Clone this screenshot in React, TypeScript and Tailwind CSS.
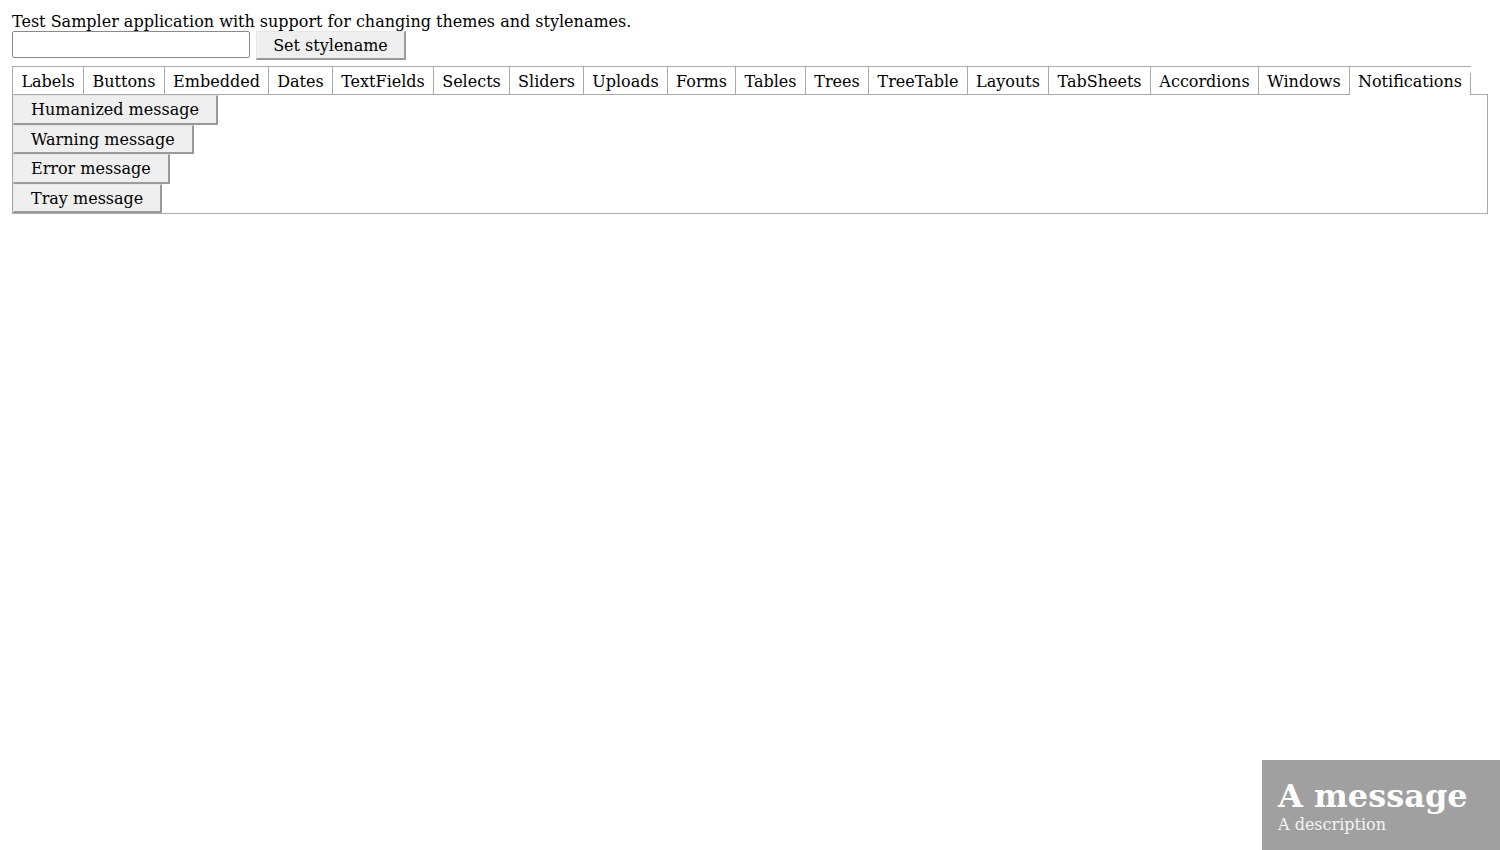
import React from "react";

const tabs: { label: string; w: string }[] = [
  { label: "Labels", w: "w-[71px]" },
  { label: "Buttons", w: "w-[81px]" },
  { label: "Embedded", w: "w-[104px]" },
  { label: "Dates", w: "w-[64px]" },
  { label: "TextFields", w: "w-[101px]" },
  { label: "Selects", w: "w-[76px]" },
  { label: "Sliders", w: "w-[74px]" },
  { label: "Uploads", w: "w-[84px]" },
  { label: "Forms", w: "w-[68px]" },
  { label: "Tables", w: "w-[70px]" },
  { label: "Trees", w: "w-[63px]" },
  { label: "TreeTable", w: "w-[99px]" },
  { label: "Layouts", w: "w-[81px]" },
  { label: "TabSheets", w: "w-[102px]" },
  { label: "Accordions", w: "w-[108px]" },
  { label: "Windows", w: "w-[91px]" },
];

function NativeButton({ children }: { children: React.ReactNode }) {
  return (
    <button className="box-border h-[29.5px] px-[17px] pt-[1px] bg-[#efefef] text-[16px] leading-[19px] text-black border-t border-l border-t-[#e6e6e6] border-l-[#e6e6e6] border-r-2 border-b-2 border-r-[#9a9a9a] border-b-[#9a9a9a] text-left whitespace-nowrap">
      {children}
    </button>
  );
}

export default function App() {
  return (
    <div className="min-h-[850px] bg-white text-black font-['DejaVu_Serif',serif] text-[16px] leading-[19px] p-[12px] pt-[12px]">
      <div className="h-[19px] whitespace-nowrap">
        Test Sampler application with support for changing themes and stylenames.
      </div>
      <div className="flex items-start gap-[6px]">
        <input
          type="text"
          className="box-border w-[238px] h-[27px] border border-[#8a8a8a] rounded-[2px] bg-white px-[2px] outline-none"
        />
        <button className="box-border h-[29px] w-[150px] bg-[#efefef] text-[16px] leading-[19px] text-black border-t border-l border-t-[#e6e6e6] border-l-[#e6e6e6] border-r-2 border-b-2 border-r-[#9a9a9a] border-b-[#9a9a9a] whitespace-nowrap">
          Set stylename
        </button>
      </div>
      <div className="mt-[6px] w-[1476px]">
        <div className="flex items-stretch">
          <div className="flex border-t border-[#aaaaaa]">
            {tabs.map((t) => (
              <div
                key={t.label}
                className={`box-border h-[28px] pt-[5px] border-l border-b border-[#aaaaaa] whitespace-nowrap text-center ${t.w}`}
              >
                {t.label}
              </div>
            ))}
            <div className="box-border w-[121px] h-[28px] pt-[5px] border-l border-[#aaaaaa] whitespace-nowrap text-center">
              Notifications
            </div>
            <div className="w-px self-end h-[22px] bg-[#aaaaaa]" />
          </div>
          <div className="flex-1 self-end border-b border-[#aaaaaa]" />
        </div>
        <div className="box-border border-l border-r border-b border-[#aaaaaa] flex flex-col items-start">
          <NativeButton>Humanized message</NativeButton>
          <NativeButton>Warning message</NativeButton>
          <NativeButton>Error message</NativeButton>
          <NativeButton>Tray message</NativeButton>
        </div>
      </div>
      <div className="fixed right-0 bottom-0 w-[238px] h-[90px] bg-[#a0a0a0] text-white px-[16px] pt-[18px]">
        <div className="font-bold text-[32px] leading-[37px] whitespace-nowrap">A message</div>
        <div className="text-[16px] leading-[19px] text-[#f4f4f4] whitespace-nowrap">A description</div>
      </div>
    </div>
  );
}
